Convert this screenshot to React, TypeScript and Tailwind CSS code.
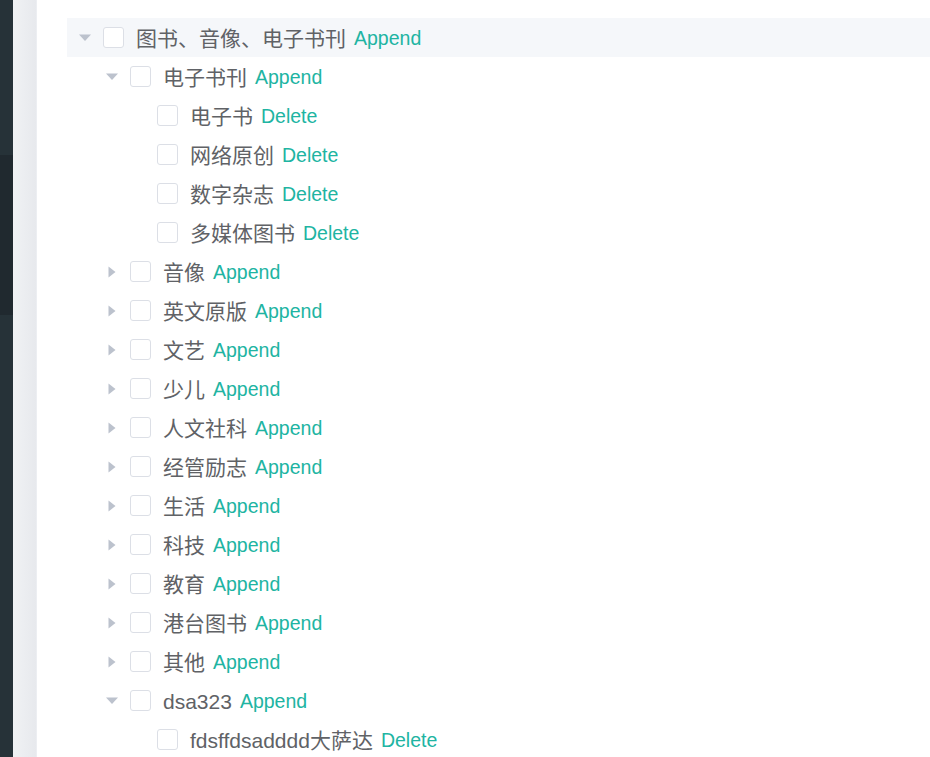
import React from "react";

type Node = {
  label: string;
  level: 0 | 1 | 2;
  state: "open" | "closed" | "leaf";
  action: "Append" | "Delete";
  active?: boolean;
};

const nodes: Node[] = [
  { label: "图书、音像、电子书刊", level: 0, state: "open", action: "Append", active: true },
  { label: "电子书刊", level: 1, state: "open", action: "Append" },
  { label: "电子书", level: 2, state: "leaf", action: "Delete" },
  { label: "网络原创", level: 2, state: "leaf", action: "Delete" },
  { label: "数字杂志", level: 2, state: "leaf", action: "Delete" },
  { label: "多媒体图书", level: 2, state: "leaf", action: "Delete" },
  { label: "音像", level: 1, state: "closed", action: "Append" },
  { label: "英文原版", level: 1, state: "closed", action: "Append" },
  { label: "文艺", level: 1, state: "closed", action: "Append" },
  { label: "少儿", level: 1, state: "closed", action: "Append" },
  { label: "人文社科", level: 1, state: "closed", action: "Append" },
  { label: "经管励志", level: 1, state: "closed", action: "Append" },
  { label: "生活", level: 1, state: "closed", action: "Append" },
  { label: "科技", level: 1, state: "closed", action: "Append" },
  { label: "教育", level: 1, state: "closed", action: "Append" },
  { label: "港台图书", level: 1, state: "closed", action: "Append" },
  { label: "其他", level: 1, state: "closed", action: "Append" },
  { label: "dsa323", level: 1, state: "open", action: "Append" },
  { label: "fdsffdsadddd大萨达", level: 2, state: "leaf", action: "Delete" },
];

const indent = ["pl-0", "pl-[27px]", "pl-[54px]"];

const Caret = ({ state }: { state: Node["state"] }) => (
  <span className="w-[36px] h-[39px] flex items-center justify-center shrink-0">
    {state === "open" && (
      <svg width="12" height="7" viewBox="0 0 12 7">
        <path d="M0 0.5 L12 0.5 L6 7 Z" fill="#bcc2cd" />
      </svg>
    )}
    {state === "closed" && (
      <svg width="8" height="12" viewBox="0 0 8 12">
        <path d="M0.5 0.5 L7.5 6 L0.5 11.5 Z" fill="#bcc2cd" />
      </svg>
    )}
  </span>
);

const TreeRow = ({ node }: { node: Node }) => (
  <div
    className={`flex items-center h-[39px] ${indent[node.level]} ${node.active ? "bg-[#f5f7fa]" : ""}`}
  >
    <Caret state={node.state} />
    <span className="w-[21px] h-[21px] rounded-[3px] border border-[#dcdfe6] bg-white shrink-0 mr-[12px]" />
    <span className="pt-[2px] text-[21px] text-[#606266] leading-none whitespace-nowrap">{node.label}</span>
    <span className="pt-[2px] ml-[8px] text-[19.5px] text-[#20b4a2] leading-none whitespace-nowrap">
      {node.action}
    </span>
  </div>
);

export default function App() {
  return (
    <div
      className="flex w-[930px] h-[757px] overflow-hidden bg-white"
      style={{ fontFamily: '"Liberation Sans", "Noto Sans CJK SC", sans-serif' }}
    >
      {/* dark sidebar edge */}
      <div className="w-[13px] flex flex-col shrink-0">
        <div className="h-[155px] bg-[#263238]" />
        <div className="h-[160px] bg-[#20292f]" />
        <div className="flex-1 bg-[#263238]" />
      </div>
      {/* gutter */}
      <div className="w-[24px] shrink-0 bg-gradient-to-r from-[#f0f2f4] to-[#e7e9ed] border-r border-[#eceef2]" />

      <main className="flex-1 pt-[18px] pl-[30px]">
        {nodes.map((n, i) => (
          <TreeRow key={i} node={n} />
        ))}
      </main>
    </div>
  );
}
